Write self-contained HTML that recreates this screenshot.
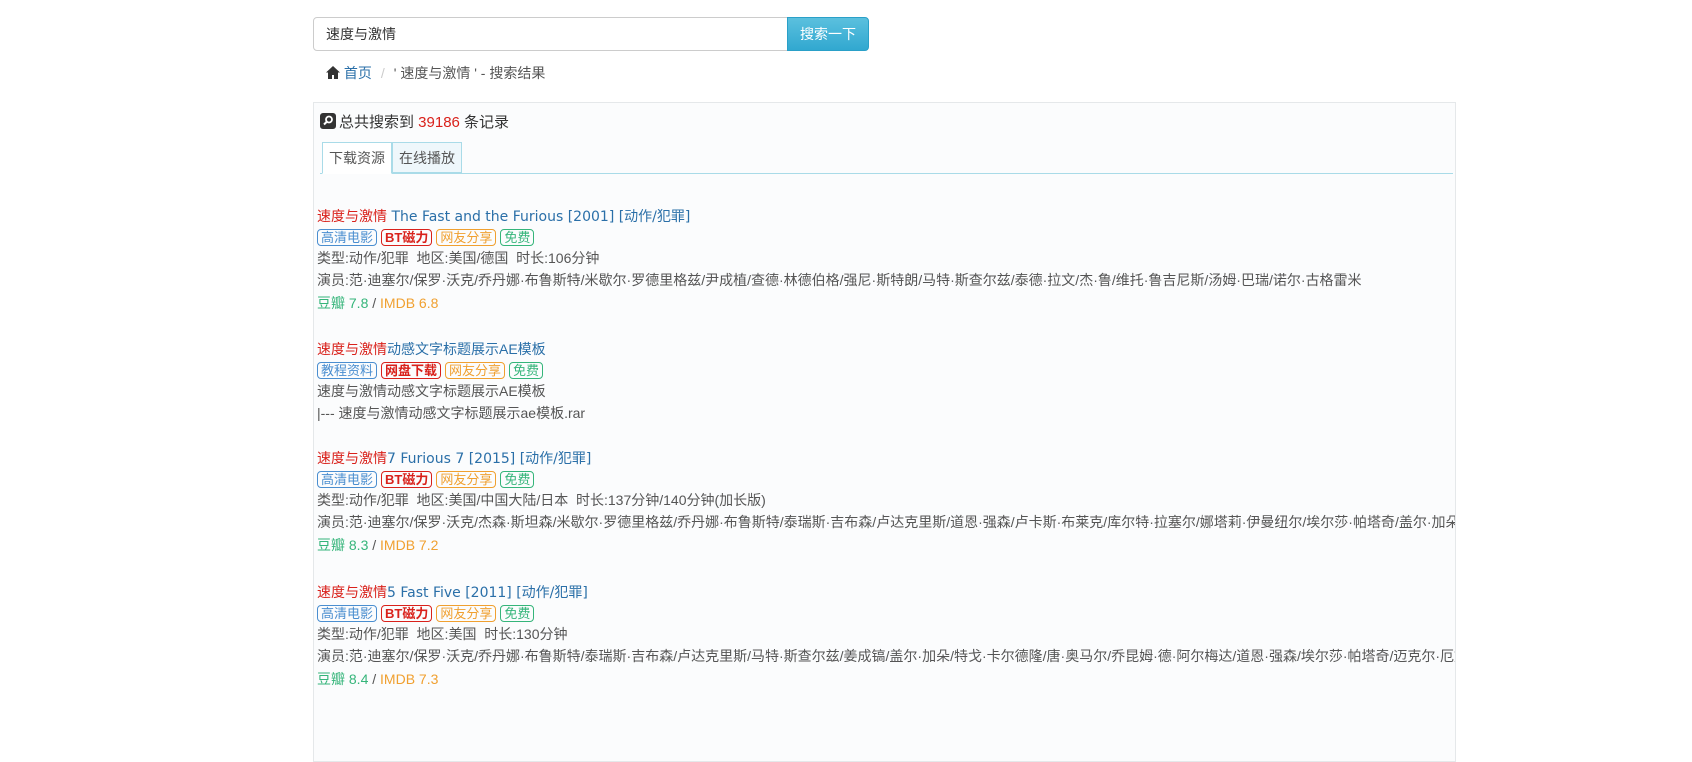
<!DOCTYPE html>
<html><head><meta charset="utf-8"><style>
body{margin:0;background:#fff;font-family:"Liberation Sans","Noto Sans CJK SC",sans-serif;font-size:14px;color:#555;width:1692px;height:702px;overflow:hidden;position:relative}
.search{position:absolute;left:313px;top:17px;width:475px;height:34px;border:1px solid #ccc;border-radius:4px 0 0 4px;box-sizing:border-box;padding:0 12px;line-height:32px;font-size:14px;color:#333}
.btn{position:absolute;left:787px;top:17px;width:82px;height:34px;box-sizing:border-box;background:linear-gradient(#5bc0de,#31a8d0);border:1px solid #2aa0c8;border-radius:0 4px 4px 0;color:#fff;text-align:center;line-height:32px;font-size:14px}
.bc{position:absolute;left:326px;top:64px;font-size:14px;color:#555;line-height:18px}
.bc a{color:#2a6fa8}
.bc .sep{color:#ccc;margin:0 9px}
.panel{position:absolute;left:313px;top:102px;width:1143px;height:660px;border:1px solid #e5e8ea;box-sizing:border-box;background:#fbfcfd;overflow:hidden}
.hd{position:absolute;left:6px;top:10px;font-size:15px;color:#333;white-space:nowrap;line-height:20px}
.hd svg{vertical-align:-2px;margin-right:3px}
.red{color:#d9211b}
.tabs{position:absolute;left:6px;top:39px;width:1133px;height:31px;border-bottom:1px solid #a9dbe8}
.tab{position:absolute;top:0;height:31px;box-sizing:border-box;border:1px solid #a9dbe8;padding:0 6px;line-height:30px;font-size:14px;color:#555;background:#eef7fb}
.tab.on{background:#fff;border-bottom-color:#fff;height:32px}
.item{position:absolute;left:3px;white-space:nowrap;font-size:14px}
.item div{line-height:22px}
.t{color:#2a6fa8;font-family:"DejaVu Sans","Noto Sans CJK SC",sans-serif;font-size:14px}
.t .red,.t .cn{font-family:"Liberation Sans","Noto Sans CJK SC",sans-serif;font-size:14px}
.tg{display:inline-block;border:1px solid;border-radius:4px;padding:0 3px;line-height:15px;font-size:13px;margin-right:4px}
.b{color:#4a8ed0;border-color:#4a8ed0}.r{color:#d9211b;border-color:#d9211b;font-weight:bold}.o{color:#f0a030;border-color:#f0a030}.g{color:#35b57a;border-color:#35b57a}
.gr{color:#35b57a}.or{color:#f0a030}
</style></head><body>
<div class="search">速度与激情</div>
<div class="btn">搜索一下</div>
<div class="bc"><svg width="14" height="13" viewBox="0 0 14 13" style="vertical-align:-1px"><path d="M7 0L0 6.5h2V13h4V9h2v4h4V6.5h2z" fill="#333"/></svg> <a>首页</a><span class="sep">/</span>' 速度与激情 ' - 搜索结果</div>
<div class="panel">
<div class="hd"><svg width="16" height="16" viewBox="0 0 16 16"><rect width="16" height="16" rx="3" fill="#333"/><circle cx="9" cy="6.5" r="3" fill="none" stroke="#fff" stroke-width="1.8"/><path d="M7 8.5L4 11.5" stroke="#fff" stroke-width="2"/></svg>总共搜索到 <span class="red">39186</span> 条记录</div>
<div class="tabs"><div class="tab on" style="left:2px">下载资源</div><div class="tab" style="left:72px">在线播放</div></div>

<div class="item" style="top:102px">
<div class="t" style="height:21px"><span class="red">速度与激情</span> The Fast and the Furious [2001] [动作/犯罪]</div>
<div style="height:21px"><span class="tg b">高清电影</span><span class="tg r">BT磁力</span><span class="tg o">网友分享</span><span class="tg g">免费</span></div>
<div style="height:22px">类型:动作/犯罪&nbsp; 地区:美国/德国&nbsp; 时长:106分钟</div>
<div style="height:23px">演员:范·迪塞尔/保罗·沃克/乔丹娜·布鲁斯特/米歇尔·罗德里格兹/尹成植/查德·林德伯格/强尼·斯特朗/马特·斯查尔兹/泰德·拉文/杰·鲁/维托·鲁吉尼斯/汤姆·巴瑞/诺尔·古格雷米</div>
<div style="height:23px"><span class="gr">豆瓣 7.8</span> / <span class="or">IMDB 6.8</span></div>
</div>

<div class="item" style="top:235px">
<div class="t" style="height:21px"><span class="red">速度与激情</span><span class="cn">动感文字标题展示AE模板</span></div>
<div style="height:21px"><span class="tg b">教程资料</span><span class="tg r">网盘下载</span><span class="tg o">网友分享</span><span class="tg g">免费</span></div>
<div style="height:22px">速度与激情动感文字标题展示AE模板</div>
<div style="height:23px">|--- 速度与激情动感文字标题展示ae模板.rar</div>
</div>

<div class="item" style="top:344px">
<div class="t" style="height:21px"><span class="red">速度与激情</span>7 Furious 7 [2015] [动作/犯罪]</div>
<div style="height:21px"><span class="tg b">高清电影</span><span class="tg r">BT磁力</span><span class="tg o">网友分享</span><span class="tg g">免费</span></div>
<div style="height:22px">类型:动作/犯罪&nbsp; 地区:美国/中国大陆/日本&nbsp; 时长:137分钟/140分钟(加长版)</div>
<div style="height:23px">演员:范·迪塞尔/保罗·沃克/杰森·斯坦森/米歇尔·罗德里格兹/乔丹娜·布鲁斯特/泰瑞斯·吉布森/卢达克里斯/道恩·强森/卢卡斯·布莱克/库尔特·拉塞尔/娜塔莉·伊曼纽尔/埃尔莎·帕塔奇/盖尔·加朵</div>
<div style="height:23px"><span class="gr">豆瓣 8.3</span> / <span class="or">IMDB 7.2</span></div>
</div>

<div class="item" style="top:478px">
<div class="t" style="height:21px"><span class="red">速度与激情</span>5 Fast Five [2011] [动作/犯罪]</div>
<div style="height:21px"><span class="tg b">高清电影</span><span class="tg r">BT磁力</span><span class="tg o">网友分享</span><span class="tg g">免费</span></div>
<div style="height:22px">类型:动作/犯罪&nbsp; 地区:美国&nbsp; 时长:130分钟</div>
<div style="height:23px">演员:范·迪塞尔/保罗·沃克/乔丹娜·布鲁斯特/泰瑞斯·吉布森/卢达克里斯/马特·斯查尔兹/姜成镐/盖尔·加朵/特戈·卡尔德隆/唐·奥马尔/乔昆姆·德·阿尔梅达/道恩·强森/埃尔莎·帕塔奇/迈克尔·厄文</div>
<div style="height:23px"><span class="gr">豆瓣 8.4</span> / <span class="or">IMDB 7.3</span></div>
</div>
</div>
</body></html>
